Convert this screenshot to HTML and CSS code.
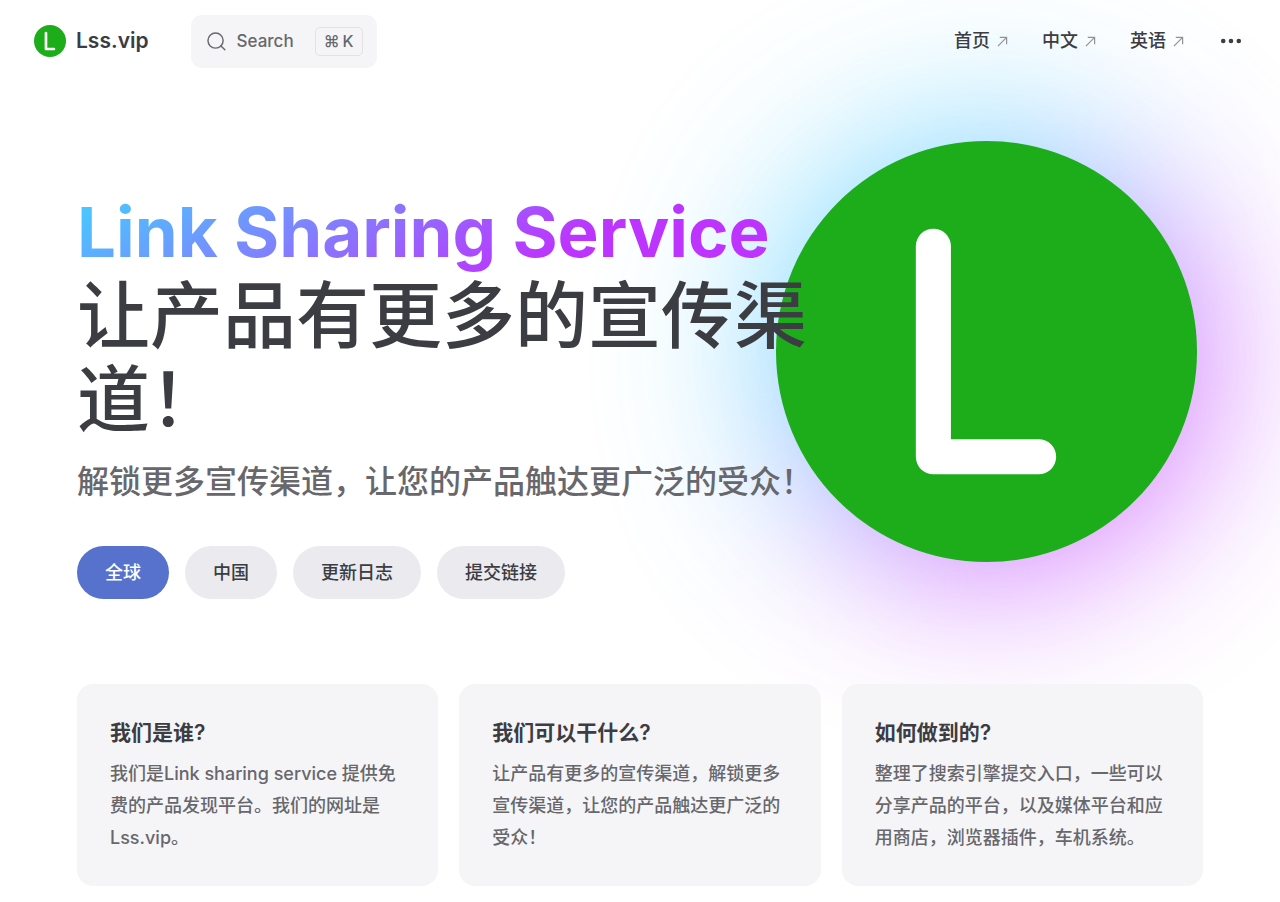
FILE: index.html
```
<!DOCTYPE html>
<html lang="zh-CN">
<head>
  <meta charset="UTF-8" />
  <meta name="viewport" content="width=device-width, initial-scale=1.0"/>
  <title>Lss.vip</title>
  <link rel="stylesheet" href="styles.css">
</head>
<body>
  <header class="nav">
    <a class="brand" href="#">
      <svg class="brand-logo" viewBox="0 0 420 420" aria-hidden="true">
        <circle cx="210" cy="210" r="210" fill="#1dad1a"/>
        <path d="M157 105V315H262" fill="none" stroke="#fff" stroke-width="35" stroke-linecap="round" stroke-linejoin="round"/>
      </svg>
      Lss.vip
    </a>
    <button class="search" type="button">
      <svg class="search-icon" viewBox="0 0 20 20" aria-hidden="true">
        <path d="M14.4 14.4 18.8 18.8M17 9a8 8 0 1 1-16 0a8 8 0 0 1 16 0z"/>
      </svg>
      Search
      <kbd><span>⌘</span><span>K</span></kbd>
    </button>
    <nav class="menu">
      <a href="#">首页 <svg class="arrow" viewBox="0 0 12 12" aria-hidden="true"><path d="M1 11 10.5 1.5M3 1.5H10.5V9"/></svg></a>
      <a href="#">中文 <svg class="arrow" viewBox="0 0 12 12" aria-hidden="true"><path d="M1 11 10.5 1.5M3 1.5H10.5V9"/></svg></a>
      <a href="#">英语 <svg class="arrow" viewBox="0 0 12 12" aria-hidden="true"><path d="M1 11 10.5 1.5M3 1.5H10.5V9"/></svg></a>
      <button class="more" type="button" aria-label="更多">
        <svg viewBox="0 0 24 24" aria-hidden="true"><circle cx="3.5" cy="12" r="2.5"/><circle cx="12" cy="12" r="2.5"/><circle cx="20.5" cy="12" r="2.5"/></svg>
      </button>
    </nav>
  </header>

  <main class="container">
    <section class="hero">
      <div class="hero-main">
        <h1><span class="clip">Link Sharing Service</span> <span class="text">让产品有更多的宣传渠道！</span></h1>
        <p class="tagline">解锁更多宣传渠道，让您的产品触达更广泛的受众！</p>
        <div class="actions">
          <a class="btn btn-brand" href="#">全球</a>
          <a class="btn" href="#">中国</a>
          <a class="btn" href="#">更新日志</a>
          <a class="btn" href="#">提交链接</a>
        </div>
      </div>
      <div class="hero-image">
        <svg viewBox="0 0 420 420" role="img" aria-label="Lss.vip">
          <circle cx="210" cy="210" r="210" fill="#1dad1a"/>
          <path d="M157 105V315H262" fill="none" stroke="#fff" stroke-width="35" stroke-linecap="round" stroke-linejoin="round"/>
        </svg>
      </div>
    </section>

    <section class="features">
      <article class="card">
        <h2>我们是谁?</h2>
        <p>我们是Link sharing service 提供免费的产品发现平台。我们的网址是Lss.vip。</p>
      </article>
      <article class="card">
        <h2>我们可以干什么?</h2>
        <p>让产品有更多的宣传渠道，解锁更多宣传渠道，让您的产品触达更广泛的受众！</p>
      </article>
      <article class="card">
        <h2>如何做到的?</h2>
        <p>整理了搜索引擎提交入口，一些可以分享产品的平台，以及媒体平台和应用商店，浏览器插件，车机系统。</p>
      </article>
    </section>
  </main>
</body>
</html>
```
FILE: styles.css
```
* {
  box-sizing: border-box;
}

body {
  margin: 0;
  background: #fff;
  color: #3c3c43;
  font-family: Inter, "Noto Sans CJK SC", sans-serif;
  font-size: 18px;
  font-weight: 500;
  line-height: 32px;
  overflow-x: hidden;
}

a {
  color: inherit;
  text-decoration: none;
}

button {
  font: inherit;
  border: 0;
  cursor: pointer;
}

/* nav */
.nav {
  display: flex;
  align-items: center;
  height: 82px;
  padding: 0 38px 0 34px;
}

.brand {
  display: flex;
  align-items: center;
  gap: 10px;
  margin-right: 42px;
  font-size: 21px;
  font-weight: 600;
}

.brand-logo {
  width: 32px;
  height: 32px;
}

.search {
  display: flex;
  align-items: center;
  height: 53px;
  padding: 0 14px 0 16px;
  border-radius: 11px;
  background: #f5f5f8;
  color: #67676c;
  font-size: 17px;
}

.search-icon {
  width: 19px;
  height: 19px;
  margin-right: 11px;
  fill: none;
  stroke: currentColor;
  stroke-width: 1.5;
  stroke-linecap: round;
}

kbd {
  display: flex;
  gap: 3px;
  margin-left: 21px;
  padding: 0 8px;
  border: 1px solid #e2e2e5;
  border-radius: 5px;
  font-family: inherit;
  font-size: 16px;
  line-height: 27px;
}

.menu {
  display: flex;
  align-items: center;
  gap: 34px;
  margin-left: auto;
}

.menu a {
  display: flex;
  align-items: center;
  gap: 7px;
}

.arrow {
  width: 11px;
  height: 11px;
  fill: none;
  stroke: #929295;
  stroke-width: 1.3;
}

.more {
  display: flex;
  padding: 0 0 0 2px;
  background: none;
  color: inherit;
}

.more svg {
  width: 22px;
  height: 22px;
  fill: currentColor;
}

/* hero */
.container {
  max-width: 1520px;
  margin: 0 auto;
  padding: 0 77px 16px;
}

.hero {
  display: grid;
  grid-template-columns: minmax(0, 2fr) minmax(0, 1fr);
  align-items: start;
  padding: 59px 0 85px;
}

.hero-main {
  position: relative;
  z-index: 1;
  padding-top: 49px;
}

h1 {
  margin: 0;
  font-size: 73px;
  font-weight: 500;
  line-height: 84px;
}

.clip {
  display: block;
  width: fit-content;
  background: linear-gradient(-30deg, #bd34fe 30%, #41d1ff);
  -webkit-background-clip: text;
  background-clip: text;
  color: transparent;
  font-size: 69px;
  font-weight: 700;
}

.text {
  display: block;
}

.tagline {
  margin: 16px 0 0;
  color: #67676c;
  font-size: 32px;
  line-height: 48px;
  white-space: nowrap;
}

.actions {
  display: flex;
  gap: 16px;
  margin-top: 40px;
}

.btn {
  padding: 0 28px;
  border-radius: 27px;
  background: #ebebef;
  line-height: 53px;
}

.btn-brand {
  background: #5672cd;
  color: #fff;
}

.hero-image {
  position: relative;
  justify-self: end;
  width: 421px;
  height: 421px;
  margin-right: 6px;
}

.hero-image::before {
  content: "";
  position: absolute;
  inset: 0;
  z-index: -1;
  border-radius: 50%;
  background: linear-gradient(-45deg, #bd34fe 50%, #47caff 50%);
  filter: blur(90px);
  opacity: 0.8;
}

.hero-image svg {
  display: block;
  width: 100%;
}

/* features */
.features {
  display: grid;
  grid-template-columns: repeat(3, 1fr);
  gap: 21px;
}

.card {
  position: relative;
  padding: 33px 32px 32px 33px;
  border-radius: 16px;
  background: #f5f5f8;
}

.card h2 {
  margin: 0 0 9px;
  font-size: 21px;
  font-weight: 600;
  line-height: 32px;
}

.card p {
  margin: 0;
  color: #67676c;
}
```
